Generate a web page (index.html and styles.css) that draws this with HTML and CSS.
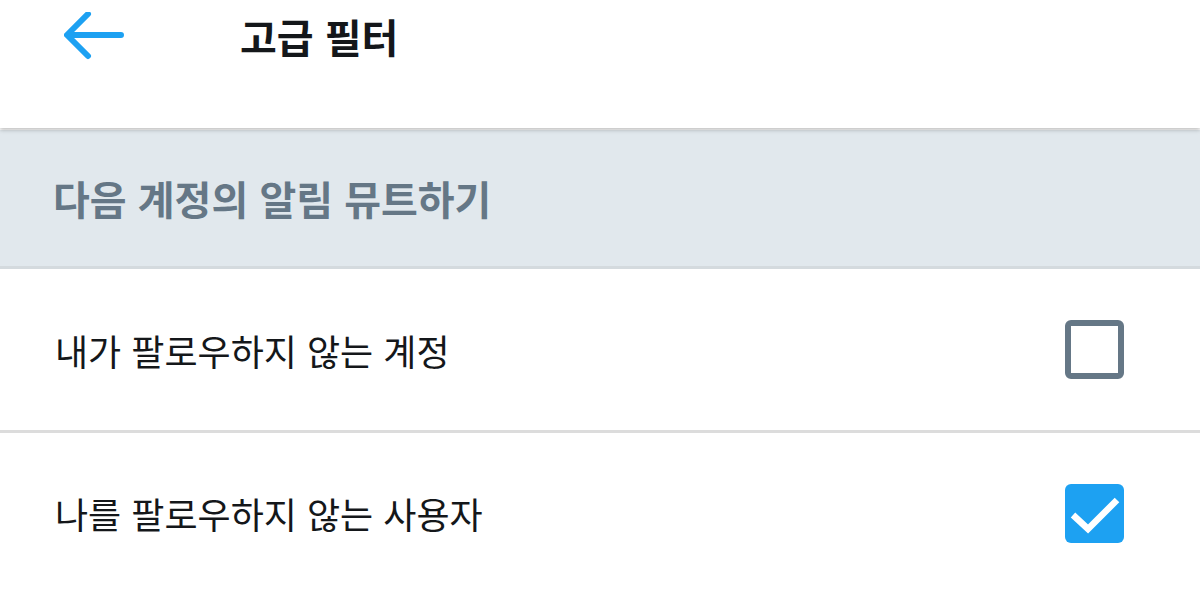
FILE: index.html
```html
<!DOCTYPE html>
<html lang="ko">
<head>
    <meta charset="UTF-8">
    <title>고급 필터</title>
    <link rel="stylesheet" href="styles.css">
</head>
<body>
    <header class="top-bar">
        <div class="toolbar">
            <button class="back" aria-label="뒤로">
                <svg width="60" height="50" viewBox="0 0 60 50">
                    <path d="M57 23H4M24 2L3 23L24 44" fill="none" stroke="#1da1f2" stroke-width="6" stroke-linecap="round" stroke-linejoin="round"/>
                </svg>
            </button>
            <h1 class="title">고급 필터</h1>
        </div>
    </header>

    <div class="section-head">다음 계정의 알림 뮤트하기</div>

    <ul class="options">
        <li class="option">
            <span class="label">내가 팔로우하지 않는 계정</span>
            <span class="check"></span>
        </li>
        <li class="option">
            <span class="label">나를 팔로우하지 않는 사용자</span>
            <span class="check on">
                <!-- tick drawn in the box's own 59px space -->
                <svg width="59" height="59" viewBox="0 0 59 59">
                    <path d="M8 31L23 45L52 16" fill="none" stroke="#fff" stroke-width="6.5"/>
                </svg>
            </span>
        </li>
    </ul>
</body>
</html>
```

FILE: styles.css
```css
body {
    margin: 0;
    font-family: "Noto Sans CJK KR", "Noto Sans", sans-serif;
    color: #14171a;
    background: #fff;
    overflow: hidden;
}

.top-bar {
    height: 128px;
    background: #fff;
    box-shadow: 0 2px 4px rgba(0, 0, 0, 0.25);
    position: relative;
    z-index: 1;
}

.toolbar {
    display: flex;
    align-items: center;
    height: 72px;
    padding-left: 64px;
}

.back {
    display: flex;
    padding: 0;
    border: none;
    background: none;
    width: 60px;
    height: 50px;
    margin-top: 2px;
}

.title {
    margin: 0 0 0 116px;
    font-size: 40px;
    font-weight: 700;
    line-height: 1;
}

.section-head {
    height: 136px;
    margin-top: 2px;
    padding-left: 53px;
    display: flex;
    align-items: center;
    background: #e1e8ed;
    border-bottom: 3px solid #d4dade;
    color: #657786;
    font-size: 40px;
    font-weight: 700;
}

.options {
    list-style: none;
    margin: 0;
    padding: 0;
}

.option {
    display: flex;
    align-items: center;
    justify-content: space-between;
    height: 161px;
    padding: 0 76px 0 55px;
    font-size: 36px;
}

.option + .option {
    border-top: 3px solid #dcdcdc;
    height: 160px;
}

.check {
    display: flex;
    width: 59px;
    height: 59px;
    box-sizing: border-box;
    border: 6px solid #657786;
    border-radius: 6px;
}

.check.on {
    border: none;
    background: #1da1f2;
}
```
